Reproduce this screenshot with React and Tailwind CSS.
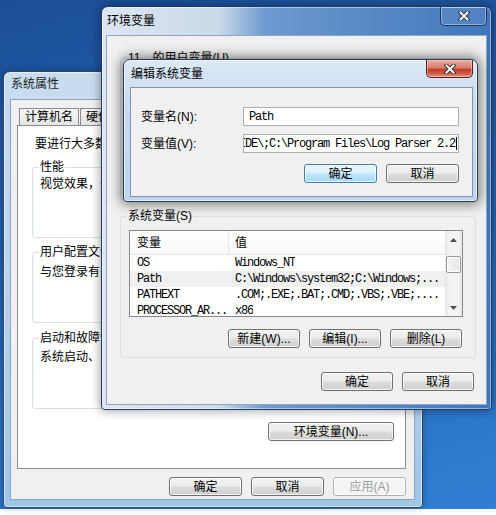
import React from 'react';

const F = "font-['Liberation_Sans','Noto_Sans_CJK_SC',sans-serif]";
const MONO = "font-['Liberation_Mono','Noto_Sans_CJK_SC',monospace] text-[12px] tracking-[-1.2px]";

// 标题栏关闭按钮里的 X
function XGlyph() {
  return (
    <svg width="12" height="10" viewBox="0 0 12 10">
      <path d="M2.5 1.5 L9.5 8.5 M9.5 1.5 L2.5 8.5" stroke="#1f2a36" strokeWidth="3.8" strokeLinecap="square" />
      <path d="M2.5 1.5 L9.5 8.5 M9.5 1.5 L2.5 8.5" stroke="#ffffff" strokeWidth="2" strokeLinecap="square" />
    </svg>
  );
}

function Arrow({ up }) {
  return (
    <svg width="7" height="4" viewBox="0 0 7 4">
      <path d={up ? "M0 4 L3.5 0 L7 4 Z" : "M0 0 L3.5 4 L7 0 Z"} fill="#4d4d4d" />
    </svg>
  );
}

function Btn({ children, className = '', focus = false, disabled = false }) {
  let skin = "border-[#707070] bg-[linear-gradient(180deg,#f2f2f2_0%,#ebebeb_48%,#dddddd_52%,#cfcfcf_100%)] text-black";
  if (focus) skin = "border-[#3c7fb1] bg-[linear-gradient(180deg,#eaf6fd_0%,#d9f0fc_48%,#bee6fd_52%,#a7d9f5_100%)] text-black";
  if (disabled) skin = "border-[#adb2b5] bg-[#f4f4f4] text-[#9d9d9d]";
  return (
    <div className={`h-[19px] shrink-0 rounded-[3px] border flex items-center justify-center text-[12px] leading-none shadow-[inset_0_0_0_1px_rgba(255,255,255,0.75)] ${skin} ${className}`}>
      {children}
    </div>
  );
}

function Group({ label, children, className = '' }) {
  return (
    <fieldset className={`border border-[#d5dfe5] rounded-[3px] px-[6px] min-w-0 ${className}`}>
      <legend className="px-[1px] leading-[14px] whitespace-nowrap">{label}</legend>
      {children}
    </fieldset>
  );
}

const rows = [
  ['OS', 'Windows_NT'],
  ['Path', 'C:\\Windows\\system32;C:\\Windows;...'],
  ['PATHEXT', '.COM;.EXE;.BAT;.CMD;.VBS;.VBE;....'],
  ['PROCESSOR_AR...', 'x86'],
];

const pathValue = 'IDE\\;C:\\Program Files\\Log Parser 2.2';

export default function App() {
  return (
    <div className={`w-[496px] h-[515px] bg-white overflow-hidden text-[12px] leading-[14px] text-black ${F}`}>
      <div className="relative h-[509px] bg-[linear-gradient(165deg,#1b4e98_0%,#2361b0_45%,#2f7fd4_100%)]">

        {/* 系统属性 */}
        <div className="absolute left-[3px] top-[71px] w-[420px] h-[437px] flex flex-col rounded-t-[7px] rounded-b-[4px] border border-[#34496a] bg-[linear-gradient(180deg,#c9dcf0_0%,#b8d1ea_55%,#9fc6e8_100%)] pl-[6px] pr-[7px] pb-[7px] shadow-[inset_0_0_0_1px_rgba(255,255,255,0.5),0_0_6px_rgba(0,0,0,0.3)]">
          <div className="h-[27px] shrink-0 flex items-center pl-[1px] pb-[3px] text-[#1e1e1e]">系统属性</div>
          <div className="flex-1 flex flex-col border border-[#8ea4bf] bg-[#f0f0f0] pl-[6px] pr-[8px] pt-[8px]">
            <div className="flex gap-[1px] ml-[2px] h-[17px]">
              <div className="w-[60px] border border-b-0 border-[#898c95] bg-[linear-gradient(180deg,#f6f6f6,#e5e5e5)] flex items-center justify-center">计算机名</div>
              <div className="w-[36px] border border-b-0 border-[#898c95] bg-[linear-gradient(180deg,#f6f6f6,#e5e5e5)] flex items-center justify-center">硬件</div>
              <div className="w-[36px] border border-b-0 border-[#898c95] bg-white flex items-center justify-center">高级</div>
              <div className="w-[60px] border border-b-0 border-[#898c95] bg-[linear-gradient(180deg,#f6f6f6,#e5e5e5)] flex items-center justify-center">系统保护</div>
              <div className="w-[36px] border border-b-0 border-[#898c95] bg-[linear-gradient(180deg,#f6f6f6,#e5e5e5)] flex items-center justify-center">远程</div>
            </div>
            <div className="h-[344px] border border-[#898c95] bg-white flex flex-col pl-[14px] pr-[10px] pt-[11px]">
              <div className="pl-[3px] whitespace-nowrap">要进行大多数更改，您必须作为管理员登录。</div>
              <Group label="性能" className="mt-[9px]">
                <div className="h-[63px] pt-[3px] pl-[1px] whitespace-nowrap">视觉效果，处理器计划，内存使用，以及虚拟内存</div>
              </Group>
              <Group label="用户配置文件" className="mt-[7px]">
                <div className="h-[63px] pt-[6px] pl-[1px] whitespace-nowrap">与您登录有关的桌面设置</div>
              </Group>
              <Group label="启动和故障恢复" className="mt-[8px]">
                <div className="h-[63px] pt-[5px] pl-[1px] whitespace-nowrap">系统启动、系统失败和调试信息</div>
              </Group>
              <div className="mt-[13px] flex justify-end pr-[1px]">
                <Btn className="w-[126px]">环境变量(N)...</Btn>
              </div>
            </div>
            <div className="mt-[8px] flex justify-end gap-[9px]">
              <Btn className="w-[73px]">确定</Btn>
              <Btn className="w-[73px]">取消</Btn>
              <Btn className="w-[73px]" disabled>应用(A)</Btn>
            </div>
          </div>
        </div>

        {/* 环境变量 */}
        <div className="absolute left-[101px] top-[6px] w-[391px] h-[404px] flex flex-col rounded-t-[7px] rounded-b-[4px] border border-[#1f3c66] bg-[linear-gradient(90deg,#dde6f0_0%,#cbd9e9_30%,#6d9ad0_42%,#3f76bb_100%)] px-[4px] pb-[4px] shadow-[inset_0_0_0_1px_rgba(255,255,255,0.45),0_0_8px_2px_rgba(0,0,0,0.3)]">
          <div className="h-[28px] shrink-0 flex items-center pl-[1px]">环境变量</div>
          <div className="absolute right-[4px] top-0 w-[47px] h-[19px] flex items-center justify-center rounded-b-[5px] border border-t-0 border-[#1c3b66] bg-[rgba(255,255,255,0.08)] shadow-[inset_0_0_0_1px_rgba(190,215,245,0.55)]">
            <XGlyph />
          </div>
          <div className="flex-1 flex flex-col border border-[#8fa6c1] bg-[#f0f0f0] pl-[13px] pr-[10px] pt-[15px]">
            <Group label="11　的用户变量(U)">
              <div className="h-[134px]" />
            </Group>
            <Group label="系统变量(S)" className="mt-[9px]">
              <div className="pl-[2px] pr-[6px] pt-[7px] pb-[9px]">
                <div className="h-[87px] border border-[#828790] bg-white flex overflow-hidden">
                  <div className="flex-1 min-w-0 flex flex-col overflow-hidden">
                    <div className="h-[24px] shrink-0 flex border-b border-[#e5e5e5] bg-[linear-gradient(180deg,#ffffff,#f7f8fa)]">
                      <div className="w-[99px] shrink-0 flex items-center pl-[7px] border-r border-[#e3e8ee]">变量</div>
                      <div className="flex items-center pl-[6px]">值</div>
                    </div>
                    {rows.map(([name, value], i) => (
                      <div key={name} className={`h-[16px] shrink-0 flex items-center whitespace-nowrap ${MONO} ${i === 1 ? 'bg-[#f0f0f0]' : ''}`}>
                        <div className="w-[99px] shrink-0 pl-[7px] overflow-hidden">{name}</div>
                        <div className="pl-[6px] overflow-hidden">{value}</div>
                      </div>
                    ))}
                  </div>
                  <div className="w-[17px] shrink-0 flex flex-col bg-[linear-gradient(90deg,#e6e6e6,#f4f4f4_25%,#f4f4f4_75%,#e6e6e6)]">
                    <div className="h-[17px] flex items-center justify-center"><Arrow up /></div>
                    <div className="flex-1">
                      <div className="mt-[8px] mx-[1px] h-[17px] rounded-[2px] border border-[#979797] bg-[linear-gradient(90deg,#f5f5f5,#e6e6e6)] shadow-[inset_0_0_0_1px_#ffffff]" />
                    </div>
                    <div className="h-[17px] flex items-center justify-center"><Arrow /></div>
                  </div>
                </div>
                <div className="mt-[12px] flex justify-end gap-[9px] pr-[1px]">
                  <Btn className="w-[72px]">新建(W)...</Btn>
                  <Btn className="w-[72px]">编辑(I)...</Btn>
                  <Btn className="w-[72px]">删除(L)</Btn>
                </div>
              </div>
            </Group>
            <div className="mt-[14px] flex justify-end gap-[9px] pr-[2px]">
              <Btn className="w-[72px]">确定</Btn>
              <Btn className="w-[72px]">取消</Btn>
            </div>
          </div>
        </div>

        {/* 编辑系统变量 */}
        <div className="absolute left-[123px] top-[59px] w-[355px] h-[143px] flex flex-col rounded-t-[7px] rounded-b-[4px] border border-[#2a3c55] bg-[linear-gradient(180deg,#dde9f6_0%,#c7dcf1_30%,#bcd5ee_100%)] pl-[6px] pr-[4px] pb-[4px] shadow-[inset_0_0_0_1px_rgba(255,255,255,0.6),0_0_12px_3px_rgba(0,0,0,0.45)]">
          <div className="h-[27px] shrink-0 flex items-center pl-[1px]">编辑系统变量</div>
          <div className="absolute right-[4px] top-0 w-[47px] h-[18px] flex items-center justify-center rounded-b-[5px] border border-t-0 border-[#5a1f17] bg-[linear-gradient(180deg,#eab0a2_0%,#d97c6c_45%,#c23f2c_55%,#cc5a45_80%,#e39a86_100%)] shadow-[inset_0_0_0_1px_rgba(255,220,210,0.5)]">
            <XGlyph />
          </div>
          <div className="flex-1 flex flex-col border border-[#8195b0] bg-[#f0f0f0] pl-[10px] pr-[13px] pt-[19px]">
            <div className="flex items-center">
              <div className="w-[102px] shrink-0">变量名(N):</div>
              <div className={`w-[218px] h-[19px] border border-[#abadb3] bg-white flex items-center pl-[5px] ${MONO}`}>Path</div>
            </div>
            <div className="flex items-center mt-[8px]">
              <div className="w-[102px] shrink-0">变量值(V):</div>
              <div className={`w-[218px] h-[19px] border border-[#abadb3] bg-white flex items-center justify-end overflow-hidden whitespace-nowrap pr-[1px] ${MONO}`}>
                <span>{pathValue}</span>
                <span className="w-[1px] h-[13px] bg-black shrink-0 ml-[1px]" />
              </div>
            </div>
            <div className="mt-[11px] flex justify-end gap-[9px]">
              <Btn className="w-[73px] shadow-[0_0_3px_rgba(60,160,230,0.7)]" focus>确定</Btn>
              <Btn className="w-[73px]">取消</Btn>
            </div>
          </div>
        </div>
      </div>
    </div>
  );
}
